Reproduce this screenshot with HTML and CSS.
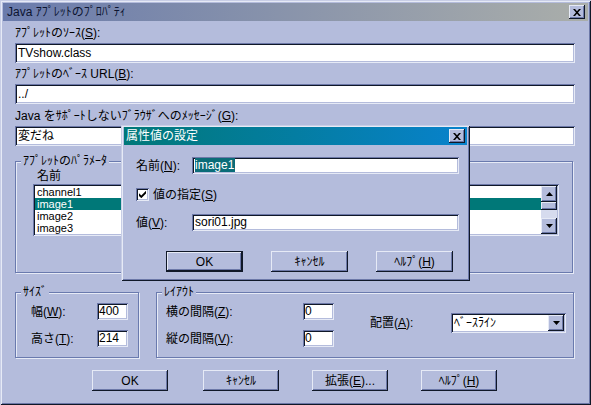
FILE: index.html
```html
<!DOCTYPE html>
<html lang="ja">
<head>
<meta charset="utf-8">
<title>Java ｱﾌﾟﾚｯﾄのﾌﾟﾛﾊﾟﾃｨ</title>
<link rel="stylesheet" href="styles.css">
</head>
<body>
<div class="window">
  <div class="titlebar inactive">
    <span class="title-text">Java ｱﾌﾟﾚｯﾄのﾌﾟﾛﾊﾟﾃｨ</span>
    <span class="cap-btn"><svg width="8" height="7" viewBox="0 0 8 7"><path d="M0 0h2l2 2.3L6 0h2L5 3.5 8 7H6L4 4.7 2 7H0l3-3.5z"/></svg></span>
  </div>
  <div class="content">
    <div class="label lbl-src">ｱﾌﾟﾚｯﾄのｿｰｽ(<u>S</u>):</div>
    <div class="field field-wide">TVshow.class</div>
    <div class="label lbl-base">ｱﾌﾟﾚｯﾄのﾍﾞｰｽ URL(<u>B</u>):</div>
    <div class="field field-wide">../</div>
    <div class="label lbl-msg">Java をｻﾎﾟｰﾄしないﾌﾞﾗｳｻﾞへのﾒｯｾｰｼﾞ(<u>G</u>):</div>
    <div class="field field-wide">変だね</div>

    <fieldset class="group group-params">
      <legend>ｱﾌﾟﾚｯﾄのﾊﾟﾗﾒｰﾀ</legend>
      <div class="col-head">名前</div>
      <div class="listbox">
        <ul class="list-items">
          <li>channel1</li>
          <li class="selected">image1</li>
          <li>image2</li>
          <li>image3</li>
        </ul>
        <div class="vscroll">
          <div class="sb-btn"><svg width="7" height="4" viewBox="0 0 7 4"><path d="M3.5 0L7 4H0z"/></svg></div>
          <div class="sb-thumb"></div>
          <div class="sb-track"></div>
          <div class="sb-btn"><svg width="7" height="4" viewBox="0 0 7 4"><path d="M0 0h7L3.5 4z"/></svg></div>
        </div>
      </div>
    </fieldset>

    <div class="group-row">
      <fieldset class="group group-size">
        <legend>ｻｲｽﾞ</legend>
        <div class="size-grid">
          <span class="label">幅(<u>W</u>):</span><div class="field field-num">400</div>
          <span class="label">高さ(<u>T</u>):</span><div class="field field-num">214</div>
        </div>
      </fieldset>
      <fieldset class="group group-layout">
        <legend>ﾚｲｱｳﾄ</legend>
        <div class="layout-grid">
          <span class="label cell-l1">横の間隔(<u>Z</u>):</span>
          <div class="field field-num cell-f1">0</div>
          <span class="label cell-l2">縦の間隔(<u>V</u>):</span>
          <div class="field field-num cell-f2">0</div>
          <span class="label align-label">配置(<u>A</u>):</span>
          <div class="combo">
            <span class="combo-text">ﾍﾞｰｽﾗｲﾝ</span>
            <span class="combo-btn"><svg width="7" height="4" viewBox="0 0 7 4"><path d="M0 0h7L3.5 4z"/></svg></span>
          </div>
        </div>
      </fieldset>
    </div>

    <div class="button-row">
      <div class="btn btn-first">OK</div>
      <div class="btn">ｷｬﾝｾﾙ</div>
      <div class="btn">拡張(<u>E</u>)...</div>
      <div class="btn">ﾍﾙﾌﾟ(<u>H</u>)</div>
    </div>
  </div>

  <div class="dialog">
    <div class="titlebar active">
      <span class="title-text">属性値の設定</span>
      <span class="cap-btn"><svg width="8" height="7" viewBox="0 0 8 7"><path d="M0 0h2l2 2.3L6 0h2L5 3.5 8 7H6L4 4.7 2 7H0l3-3.5z"/></svg></span>
    </div>
    <div class="dialog-body">
      <div class="dlg-row dlg-row-name">
        <span class="dlg-label">名前(<u>N</u>):</span>
        <div class="field field-dlg"><span class="sel-text">image1</span></div>
      </div>
      <div class="dlg-row dlg-row-check">
        <span class="checkbox"><svg width="7" height="7" viewBox="0 0 7 7"><path d="M0 2.2l2.3 2.3L7 -0.2V2.6L2.3 7.2 0 4.9z"/></svg></span>
        <span class="check-label">値の指定(<u>S</u>)</span>
      </div>
      <div class="dlg-row dlg-row-value">
        <span class="dlg-label">値(<u>V</u>):</span>
        <div class="field field-dlg">sori01.jpg</div>
      </div>
      <div class="dlg-buttons">
        <div class="btn btn-default">OK</div>
        <div class="btn">ｷｬﾝｾﾙ</div>
        <div class="btn">ﾍﾙﾌﾟ(<u>H</u>)</div>
      </div>
    </div>
  </div>
</div>
</body>
</html>
```

FILE: styles.css
```css
* { box-sizing: border-box; }
html, body { margin: 0; padding: 0; }
body {
  background: #b4bcdc;
  font-family: "Liberation Sans", "Noto Sans CJK JP", sans-serif;
  font-size: 12px;
  color: #000;
}
u {
  text-decoration: underline;
  text-decoration-thickness: 1px;
  text-underline-offset: 1px;
}

.window {
  position: relative;
  width: 591px;
  height: 405px;
  padding: 3px;
  background: #b4bcdc;
  box-shadow: inset 1px 1px 0 #c8cee6, inset -1px -1px 0 #101828,
              inset 2px 2px 0 #e6eaf6, inset -2px -2px 0 #6c78a8;
}

.titlebar {
  height: 18px;
  display: flex;
  align-items: center;
  justify-content: space-between;
  padding: 0 3px 0 4px;
  line-height: 14px;
  white-space: nowrap;
}
.titlebar.inactive {
  background: linear-gradient(to right, #6a7bac, #aaaeaa);
  color: #0c1430;
}
.titlebar.active {
  background: linear-gradient(to right, #007878, #0882cc);
  color: #fff;
  padding: 0 2px;
}
.cap-btn {
  width: 16px;
  height: 14px;
  display: flex;
  align-items: center;
  justify-content: center;
  background: #b4bcdc;
  box-shadow: inset -1px -1px 0 #101828, inset 1px 1px 0 #e6eaf6, inset -2px -2px 0 #6c78a8;
}
.cap-btn svg, .sb-btn svg, .combo-btn svg, .checkbox svg { display: block; fill: #000; }

.content { padding-left: 12px; }

.label {
  display: block;
  line-height: 14px;
  height: 14px;
  white-space: nowrap;
}
.lbl-src { margin-top: 5px; }
.lbl-base { margin-top: 4px; }
.lbl-msg { margin-top: 5px; }

.field {
  background: #fff;
  height: 20px;
  line-height: 16px;
  padding: 2px 2px 2px 3px;
  white-space: nowrap;
  overflow: hidden;
  box-shadow: inset 1px 1px 0 #6c78a8, inset -1px -1px 0 #e6eaf6,
              inset 2px 2px 0 #101828, inset -2px -2px 0 #b4bcdc;
}
.field-wide { width: 560px; margin-top: 3px; }

.group {
  margin: 0;
  padding: 0;
  min-width: 0;
  border: 1px solid #6a7aae;
  box-shadow: 1px 1px 0 #e6eaf6, inset 1px 1px 0 #e6eaf6;
}
.group legend {
  margin-left: 5px;
  padding: 0 2px;
  line-height: 14px;
  background: #b4bcdc;
  white-space: nowrap;
}

.group-params {
  width: 558px;
  margin-top: 8px;
  padding-bottom: 36px;
}
.col-head {
  margin-top: 1px;
  padding-left: 21px;
  line-height: 14px;
  height: 14px;
}
.listbox {
  margin-top: 1px;
  margin-left: 17px;
  width: 526px;
  height: 52px;
  padding: 2px;
  display: flex;
  background: #fff;
  box-shadow: inset 1px 1px 0 #6c78a8, inset -1px -1px 0 #e6eaf6,
              inset 2px 2px 0 #101828, inset -2px -2px 0 #b4bcdc;
}
.list-items {
  list-style: none;
  margin: 0;
  padding: 0;
  flex: 1;
}
.list-items li {
  height: 12px;
  line-height: 12px;
  font-size: 11px;
  padding-left: 2px;
  white-space: nowrap;
}
.list-items li.selected { background: #007878; color: #fff; }
.vscroll {
  width: 16px;
  display: flex;
  flex-direction: column;
}
.sb-btn, .sb-thumb, .combo-btn {
  background: #b4bcdc;
  box-shadow: inset -1px -1px 0 #101828, inset 1px 1px 0 #e6eaf6, inset -2px -2px 0 #6c78a8;
}
.sb-btn {
  height: 16px;
  display: flex;
  align-items: center;
  justify-content: center;
}
.sb-thumb { height: 8px; }
.sb-track { height: 8px; background: #d6dbee; }

.group-row {
  display: flex;
  gap: 17px;
  margin-top: 12px;
}
.group-size { width: 124px; padding-bottom: 10px; }
.group-layout { width: 418px; padding-bottom: 10px; }

.size-grid {
  display: grid;
  grid-template-columns: 66px 31px;
  grid-template-rows: 17px 17px;
  row-gap: 10px;
  align-items: center;
  margin-top: 4px;
  padding-left: 15px;
}
.field-num {
  width: 31px;
  height: 17px;
  line-height: 13px;
  padding: 2px 1px 2px 2px;
}

.layout-grid {
  display: grid;
  grid-template-columns: 137px 67px 81px 115px;
  grid-template-rows: 17px 17px;
  row-gap: 10px;
  align-items: center;
  margin-top: 4px;
  padding-left: 9px;
}
.cell-l1 { grid-column: 1; grid-row: 1; }
.cell-f1 { grid-column: 2; grid-row: 1; }
.cell-l2 { grid-column: 1; grid-row: 2; }
.cell-f2 { grid-column: 2; grid-row: 2; }
.align-label {
  grid-column: 3;
  grid-row: 1 / span 2;
  align-self: start;
  margin-top: 10px;
  line-height: 20px;
  height: 20px;
}
.combo {
  grid-column: 4;
  grid-row: 1 / span 2;
  align-self: start;
  margin-top: 10px;
  width: 115px;
  height: 20px;
  padding: 2px;
  display: flex;
  background: #fff;
  box-shadow: inset 1px 1px 0 #6c78a8, inset -1px -1px 0 #e6eaf6,
              inset 2px 2px 0 #101828, inset -2px -2px 0 #b4bcdc;
}
.combo-text {
  flex: 1;
  line-height: 16px;
  padding-left: 1px;
  white-space: nowrap;
}
.combo-btn {
  width: 16px;
  height: 16px;
  display: flex;
  align-items: center;
  justify-content: center;
}

.button-row {
  display: flex;
  gap: 33px;
  margin-top: 12px;
  padding-left: 77px;
}
.btn {
  width: 76px;
  height: 21px;
  display: flex;
  align-items: center;
  justify-content: center;
  line-height: 14px;
  white-space: nowrap;
  background: #b4bcdc;
  box-shadow: inset -1px -1px 0 #101828, inset 1px 1px 0 #e6eaf6, inset -2px -2px 0 #6c78a8;
}
.btn-first { margin-right: 2px; }
.btn-default {
  box-shadow: inset 0 0 0 1px #101828, inset -2px -2px 0 #101828,
              inset 2px 2px 0 #e6eaf6, inset -3px -3px 0 #6c78a8;
}

.dialog {
  position: absolute;
  left: 121px;
  top: 125px;
  width: 349px;
  height: 156px;
  padding: 2px 3px 3px;
  background: #b4bcdc;
  box-shadow: inset 1px 1px 0 #c8cee6, inset -1px -1px 0 #101828,
              inset 2px 2px 0 #e6eaf6, inset -2px -2px 0 #6c78a8;
}
.dialog-body { padding-left: 12px; }
.dlg-row { display: flex; align-items: center; }
.dlg-label { width: 56px; line-height: 14px; white-space: nowrap; }
.field-dlg {
  width: 267px;
  height: 17px;
  line-height: 13px;
  padding: 2px 2px 2px 3px;
}
.sel-text { background: #0a6c78; color: #fff; padding-right: 1px; }
.dlg-row-name { margin-top: 12px; }
.dlg-row-check { margin-top: 14px; height: 13px; }
.dlg-row-value { margin-top: 13px; }
.checkbox {
  width: 13px;
  height: 13px;
  display: flex;
  align-items: center;
  justify-content: center;
  background: #fff;
  box-shadow: inset 1px 1px 0 #6c78a8, inset -1px -1px 0 #e6eaf6,
              inset 2px 2px 0 #101828, inset -2px -2px 0 #b4bcdc;
}
.check-label { margin-left: 4px; line-height: 14px; white-space: nowrap; }
.dlg-buttons {
  display: flex;
  gap: 28px;
  margin-top: 20px;
  padding-left: 30px;
}
.dlg-buttons .btn { width: 77px; }
```
